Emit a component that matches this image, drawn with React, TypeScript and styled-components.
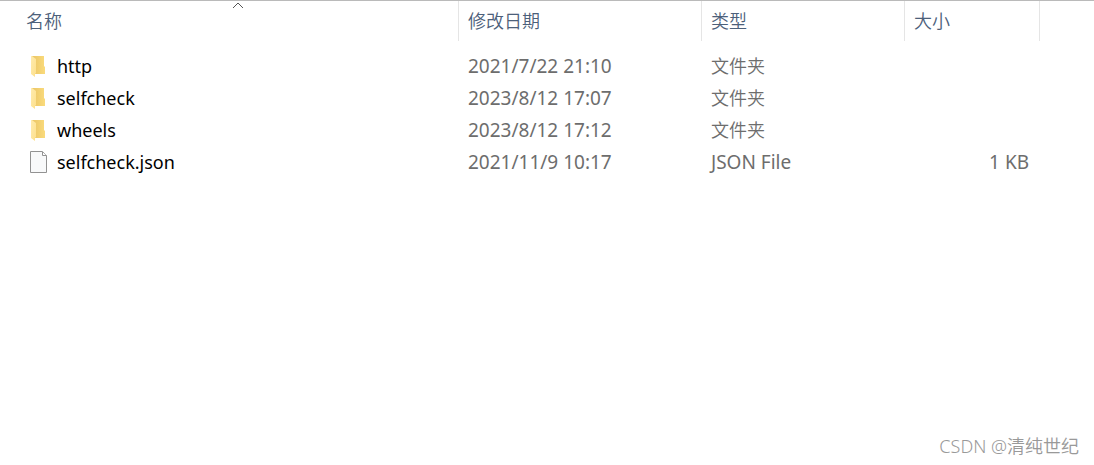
import React from "react";
import styled, { createGlobalStyle } from "styled-components";

const GlobalStyle = createGlobalStyle`
  * { box-sizing: border-box; }
  body {
    margin: 0;
    background: #fff;
    font-family: "Noto Sans", "Noto Sans CJK SC", sans-serif;
  }
`;

const Page = styled.main`
  display: flex;
  flex-direction: column;
  min-height: 100vh;
  border-top: 1px solid #bababa;
`;

const ListPane = styled.div`
  flex: 1;
  padding-left: 17px;
`;

const FileTable = styled.table`
  width: 100%;
  table-layout: fixed;
  border-collapse: separate;
  border-spacing: 0;
  font-size: 19px;
  line-height: 30px;
`;

const Column = styled.col<{ $width?: number }>`
  width: ${({ $width }) => ($width ? `${$width}px` : "auto")};
`;

const HeaderCell = styled.th`
  position: relative;
  height: 40px;
  padding: 0;
  border-right: 1px solid #e5e5e5;
  font-weight: 400;
`;

const HeaderButton = styled.button`
  display: block;
  width: 100%;
  height: 40px;
  padding: 0 9px 2px;
  border: 0;
  background: none;
  color: #4c607a;
  font-family: "Noto Sans CJK SC", sans-serif;
  font-weight: 350;
  font-size: 18px;
  text-align: left;
`;

const SortCaret = styled.svg`
  position: absolute;
  top: 1px;
  left: 50%;
  margin-left: -6px;
`;

const Rows = styled.tbody`
  &::before {
    content: "";
    display: table-row;
    height: 9px;
  }
`;

const Cell = styled.td<{ $align?: "right"; $chinese?: boolean }>`
  height: 32px;
  padding: 0 11px ${({ $chinese }) => ($chinese ? 2 : 0)}px 9px;
  color: #6d6d6d;
  font-family: ${({ $chinese }) =>
    $chinese ? `"Noto Sans CJK SC", sans-serif` : `"Noto Sans", sans-serif`};
  font-size: ${({ $chinese }) => ($chinese ? 18 : 19)}px;
  font-weight: ${({ $chinese }) => ($chinese ? 350 : 400)};
  text-align: ${({ $align }) => $align ?? "left"};
  vertical-align: middle;
  white-space: nowrap;
`;

const FileName = styled.div`
  display: flex;
  align-items: center;
  gap: 9px;
  padding-left: 3px;
  color: #000;
  font-size: 18px;
`;

const Watermark = styled.footer`
  padding: 0 15px 6px;
  color: #999;
  font-family: "Noto Sans", "Noto Sans CJK SC", sans-serif;
  font-weight: 350;
  font-size: 18px;
  line-height: 26px;
  text-align: right;
`;

const FolderIcon = () => (
  <svg width="19" height="24" viewBox="0 0 19 24" aria-hidden="true">
    <defs>
      <linearGradient id="folderBack" x1="0" x2="1">
        <stop offset="0" stopColor="#e9c364" />
        <stop offset="1" stopColor="#fadb7c" />
      </linearGradient>
      <linearGradient id="folderFlap" x1="0" x2="1" y2="1">
        <stop offset="0" stopColor="#ffebae" />
        <stop offset="1" stopColor="#fde08c" />
      </linearGradient>
    </defs>
    <path d="M2 2H15V12L16 13V20H5Z" fill="url(#folderBack)" />
    <path d="M2 2H3L7 5V19L6 20V23L2 20Z" fill="url(#folderFlap)" />
  </svg>
);

const DocumentIcon = () => (
  <svg width="19" height="24" viewBox="0 0 19 24" aria-hidden="true">
    <path d="M1.5 1.5H13.5L17.5 5.5V22.5H1.5Z" fill="#f8f9fa" stroke="#929292" />
    <path d="M13.5 2V5.5H17.5" fill="#fff" stroke="#929292" />
  </svg>
);

const files = [
  { name: "http", date: "2021/7/22 21:10", type: "文件夹", size: "", folder: true },
  { name: "selfcheck", date: "2023/8/12 17:07", type: "文件夹", size: "", folder: true },
  { name: "wheels", date: "2023/8/12 17:12", type: "文件夹", size: "", folder: true },
  { name: "selfcheck.json", date: "2021/11/9 10:17", type: "JSON File", size: "1 KB", folder: false },
];

export default function App() {
  return (
    <>
      <GlobalStyle />
      <Page>
        <ListPane>
          <FileTable>
            <colgroup>
              <Column $width={442} />
              <Column $width={243} />
              <Column $width={203} />
              <Column $width={135} />
              <Column />
            </colgroup>
            <thead>
              <tr>
                <HeaderCell scope="col" aria-sort="ascending">
                  <HeaderButton type="button">名称</HeaderButton>
                  <SortCaret width="12" height="7" viewBox="0 0 12 7" aria-hidden="true">
                    <path d="M1 6L6 1L11 6" fill="none" stroke="#555" />
                  </SortCaret>
                </HeaderCell>
                <HeaderCell scope="col"><HeaderButton type="button">修改日期</HeaderButton></HeaderCell>
                <HeaderCell scope="col"><HeaderButton type="button">类型</HeaderButton></HeaderCell>
                <HeaderCell scope="col"><HeaderButton type="button">大小</HeaderButton></HeaderCell>
                <td />
              </tr>
            </thead>
            <Rows>
              {files.map((file) => (
                <tr key={file.name}>
                  <Cell>
                    <FileName>
                      {file.folder ? <FolderIcon /> : <DocumentIcon />}
                      {file.name}
                    </FileName>
                  </Cell>
                  <Cell>{file.date}</Cell>
                  <Cell $chinese={file.folder}>{file.type}</Cell>
                  <Cell $align="right">{file.size}</Cell>
                  <td />
                </tr>
              ))}
            </Rows>
          </FileTable>
        </ListPane>
        <Watermark>CSDN @清纯世纪</Watermark>
      </Page>
    </>
  );
}
